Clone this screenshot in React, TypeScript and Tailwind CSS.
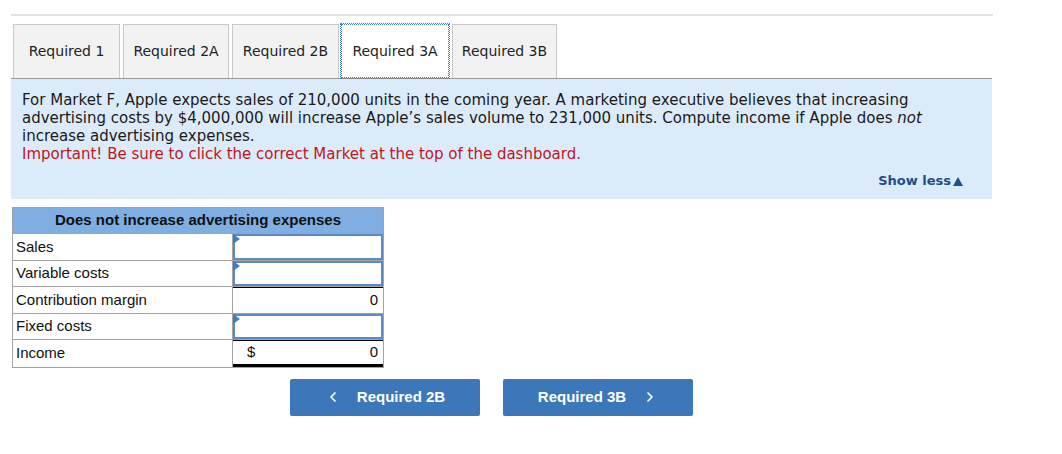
import { ChevronLeft, ChevronRight } from 'lucide-react';

const tabs = [
  { label: 'Required 1', cls: 'w-[107px]' },
  { label: 'Required 2A', cls: 'ml-[3px] w-[106px]' },
  { label: 'Required 2B', cls: 'ml-[3px] w-[107px]' },
  { label: 'Required 3A', cls: 'ml-[2px] w-[108px]' },
  { label: 'Required 3B', cls: 'ml-[3px] w-[105px]' },
];

function InputCell() {
  return (
    <div className="relative h-full border-2 border-[#5b8ac4] bg-white">
      {/* little marker in the corner of editable cells */}
      <span className="absolute -left-[2px] -top-[2px] h-0 w-0 border-y-[5px] border-l-[7px] border-y-transparent border-l-[#3f7cc4]" />
    </div>
  );
}

const rows: { label: string; kind: 'input' | 'total' | 'income' }[] = [
  { label: 'Sales', kind: 'input' },
  { label: 'Variable costs', kind: 'input' },
  { label: 'Contribution margin', kind: 'total' },
  { label: 'Fixed costs', kind: 'input' },
  { label: 'Income', kind: 'income' },
];

export default function App() {
  return (
    <div className="min-h-[454px] w-[1062px] bg-white pt-[14px]">
      <div className="ml-[11px] w-[982px] border-t-2 border-[#e3e3e3]" />

      {/* Tabs */}
      <div className="ml-[13px] mt-[8px] flex font-['DejaVu_Sans',Verdana,sans-serif] text-[14px] text-[#222]">
        {tabs.map((tab) => {
          const active = tab.label === 'Required 3A';
          return (
            <div
              key={tab.label}
              className={
                active
                  ? `flex h-[54px] ${tab.cls} items-center justify-center border border-dotted border-[#3d7cc9] bg-white outline-1 outline-dotted outline-[#3d7cc9]`
                  : `flex h-[54px] ${tab.cls} items-center justify-center border border-b-0 border-[#c9c9c9] bg-[#f2f2f2]`
              }
            >
              {tab.label}
            </div>
          );
        })}
      </div>

      {/* Question panel */}
      <div className="ml-[11px] w-[981px] border-t border-[#9a9a9a] bg-[#dcebf9] px-[11px] pb-[9px] pt-[12px] font-['DejaVu_Sans',Verdana,sans-serif] text-[15px] leading-[18px] text-[#1a1a1a]">
        <p>
          For Market F, Apple expects sales of 210,000 units in the coming year. A marketing executive believes that increasing
          advertising costs by $4,000,000 will increase Apple’s sales volume to 231,000 units. Compute income if Apple does <i>not</i>{' '}
          increase advertising expenses.
        </p>
        <p className="text-[#c0161d]">Important! Be sure to click the correct Market at the top of the dashboard.</p>
        <div className="mt-[9px] flex justify-end pr-[18px]">
          <span className="flex items-center gap-[2px] text-[13px] font-bold text-[#1d4f8c]">
            Show less
            <span className="h-0 w-0 border-x-[5px] border-b-[9px] border-x-transparent border-b-[#1d4f8c]" />
          </span>
        </div>
      </div>

      {/* Table */}
      <div className="ml-[12px] mt-[8px] w-[372px] border border-[#a3a3a3] font-['Liberation_Sans',Arial,sans-serif] text-[15px] text-[#111]">
        <div className="flex h-[26px] items-center justify-center border-b border-[#a3a3a3] bg-[#7eaee2] font-bold">
          Does not increase advertising expenses
        </div>
        {rows.map((row, i) => (
          <div
            key={row.label}
            className={`grid h-[26.5px] grid-cols-[220px_1fr] ${i < rows.length - 1 ? 'border-b border-[#a3a3a3]' : ''}`}
          >
            <div className="flex items-center border-r border-[#a3a3a3] pl-[3px]">{row.label}</div>
            {row.kind === 'input' && <InputCell />}
            {row.kind === 'total' && (
              <div className="flex items-center justify-end border-t border-black pr-[5px]">0</div>
            )}
            {row.kind === 'income' && (
              <div className="flex items-center justify-between border-t border-b-[3px] border-black border-b-double pl-[14px] pr-[5px]">
                <span>$</span>
                <span>0</span>
              </div>
            )}
          </div>
        ))}
      </div>

      {/* Navigation */}
      <div className="ml-[290px] mt-[11px] flex gap-[23px] font-['Liberation_Sans',Arial,sans-serif] text-[15px] font-bold text-white">
        <button className="flex h-[37px] w-[190px] items-center justify-center gap-[16px] rounded-[2px] bg-[#3c78b9]">
          <ChevronLeft className="h-[16px] w-[16px]" strokeWidth={2.5} />
          Required 2B
        </button>
        <button className="flex h-[37px] w-[190px] items-center justify-center gap-[16px] rounded-[2px] bg-[#3c78b9]">
          Required 3B
          <ChevronRight className="h-[16px] w-[16px]" strokeWidth={2.5} />
        </button>
      </div>
    </div>
  );
}
